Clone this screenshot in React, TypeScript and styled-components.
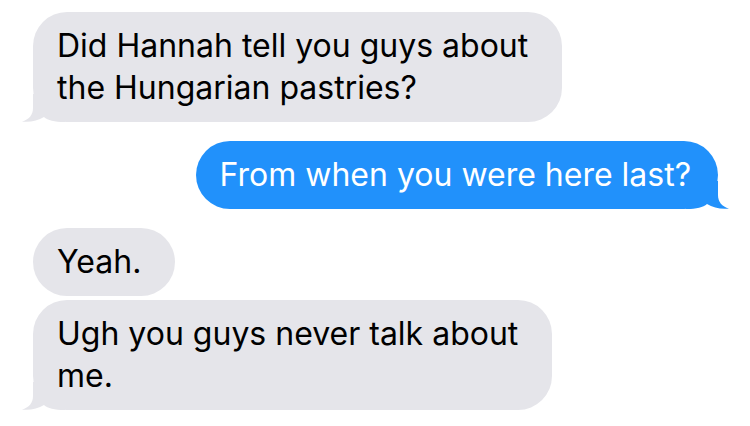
import React from "react";
import styled, { createGlobalStyle, css } from "styled-components";

const Global = createGlobalStyle`
  html, body { margin: 0; padding: 0; background: #ffffff; }
  body { font-family: "Inter", "Roboto", "Liberation Sans", sans-serif; }
`;

const Thread = styled.div`
  width: 750px;
  height: 426px;
  box-sizing: border-box;
  padding: 12px 32px 0 33px;
  display: flex;
  flex-direction: column;
  overflow: hidden;
`;

const Group = styled.div<{ $out?: boolean }>`
  display: flex;
  flex-direction: column;
  align-items: ${(p) => (p.$out ? "flex-end" : "flex-start")};
  gap: 4px;
  & + & { margin-top: 19px; }
`;

const Bubble = styled.div<{ $out?: boolean }>`
  position: relative;
  box-sizing: border-box;
  font-size: 32px;
  line-height: 42px;
  letter-spacing: 0;
  border-radius: 34px;
  white-space: nowrap;
  ${(p) =>
    p.$out
      ? css`
          background: #2191fb;
          color: #ffffff;
          padding: 13px 27px 13px 24px;
        `
      : css`
          background: #e5e5ea;
          color: #000000;
          padding: 13px 34px 13px 24px;
        `}
`;

const Tail = styled.svg<{ $out?: boolean }>`
  position: absolute;
  bottom: 0;
  width: 44px;
  height: 28px;
  ${(p) =>
    p.$out
      ? css`
          right: -12px;
          transform: scaleX(-1);
        `
      : css`
          left: -12px;
        `}
`;

const TailShape = ({ out, color }: { out?: boolean; color: string }) => (
  <Tail $out={out} viewBox="0 0 44 28">
    <path
      d="M12 0 L12 14 C12 21 8 25.5 1 27.5 C9 28.5 17 26.5 23 23 C27 26.5 33 28 44 28 L44 0 Z"
      fill={color}
    />
  </Tail>
);

type Msg = { lines: string[]; tail?: boolean };

const Text = styled.span`
  position: relative;
`;

const Message = ({ msg, out }: { msg: Msg; out?: boolean }) => (
  <Bubble $out={out}>
    {msg.tail && <TailShape out={out} color={out ? "#2191fb" : "#e5e5ea"} />}
    <Text>
      {msg.lines.map((l, i) => (
        <React.Fragment key={i}>
          {i > 0 && <br />}
          {l}
        </React.Fragment>
      ))}
    </Text>
  </Bubble>
);

export default function App() {
  return (
    <>
      <Global />
      <Thread>
        <Group>
          <Message
            msg={{
              lines: ["Did Hannah tell you guys about", "the Hungarian pastries?"],
              tail: true,
            }}
          />
        </Group>
        <Group $out>
          <Message out msg={{ lines: ["From when you were here last?"], tail: true }} />
        </Group>
        <Group>
          <Message msg={{ lines: ["Yeah."] }} />
          <Message
            msg={{ lines: ["Ugh you guys never talk about", "me."], tail: true }}
          />
        </Group>
      </Thread>
    </>
  );
}
